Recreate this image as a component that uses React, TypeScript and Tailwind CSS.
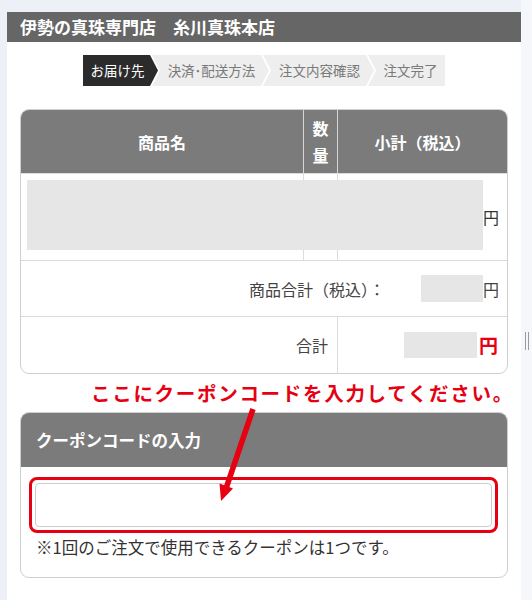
import React from 'react';

const steps = [
  { label: 'お届け先', width: 'w-[75px]', active: true },
  { label: '決済･配送方法', width: 'w-[117px]', active: false },
  { label: '注文内容確認', width: 'w-[111px]', active: false },
  { label: '注文完了', width: 'w-[77px]', active: false },
];

// chevron shapes for the checkout step bar
const clipFor = (i: number, last: boolean) => {
  if (i === 0) return 'polygon(0 0, calc(100% - 8px) 0, 100% 50%, calc(100% - 8px) 100%, 0 100%)';
  if (last) return 'polygon(0 0, 100% 0, 100% 100%, 0 100%, 8px 50%)';
  return 'polygon(0 0, calc(100% - 8px) 0, 100% 50%, calc(100% - 8px) 100%, 0 100%, 8px 50%)';
};

const StepBar: React.FC = () => (
  <div className="flex justify-center mt-[13px]">
    <div className="flex h-[31px]">
      {steps.map((s, i) => (
        <div
          key={s.label}
          className={`${s.width} ${i > 0 ? 'ml-[-6px] pl-[8px]' : 'pr-[6px]'} ${i > 0 && i < steps.length - 1 ? 'pr-[6px]' : ''} flex items-center justify-center text-[13.5px] whitespace-nowrap ${
            s.active ? 'bg-[#2b2b2b] text-white' : 'bg-[#eeeeee] text-[#7a7a7a]'
          }`}
          style={{ clipPath: clipFor(i, i === steps.length - 1) }}
        >
          {s.label}
        </div>
      ))}
    </div>
  </div>
);

const GrayBox: React.FC<{ className: string }> = ({ className }) => (
  <div className={`bg-[#e6e6e6] ${className}`} />
);

const OrderTable: React.FC = () => (
  <div className="mx-[13px] mt-[23px] border border-[#cfcfcf] rounded-[9px] overflow-hidden">
    {/* header */}
    <div className="grid grid-cols-[282px_35px_1fr] h-[63px] bg-[#7b7b7b] text-white font-bold text-[16px]">
      <div className="flex items-center justify-center">商品名</div>
      <div className="flex flex-col items-center justify-center border-l border-r border-[#d6d6d6] leading-[27px]">
        <span>数</span>
        <span>量</span>
      </div>
      <div className="flex items-center justify-center">小計（税込）</div>
    </div>

    {/* item row */}
    <div className="relative grid grid-cols-[282px_35px_1fr] h-[87px] border-t border-[#dcdcdc]">
      <div />
      <div className="border-l border-r border-[#dcdcdc]" />
      <div className="flex items-center justify-end pr-[8px] text-[16px] text-[#333]">円</div>
      <GrayBox className="absolute left-[6px] top-[6px] w-[456px] h-[70px]" />
    </div>

    {/* subtotal */}
    <div className="flex items-center justify-end h-[56px] border-t border-[#dcdcdc] pr-[8px] text-[16px] text-[#444]">
      <span>商品合計（税込）：</span>
      <GrayBox className="ml-[36px] w-[62px] h-[27px]" />
      <span>円</span>
    </div>

    {/* total */}
    <div className="grid grid-cols-[317px_1fr] h-[57px] border-t border-[#dcdcdc]">
      <div className="flex items-center justify-end pr-[9px] border-r border-[#dcdcdc] text-[16px] text-[#444]">合計</div>
      <div className="flex items-center justify-end pr-[9px]">
        <GrayBox className="w-[73px] h-[26px]" />
        <span className="ml-[2px] text-[19px] font-bold text-[#e60012]">円</span>
      </div>
    </div>
  </div>
);

const CouponBox: React.FC = () => (
  <div className="mx-[13px] border border-[#cfcfcf] rounded-[9px] overflow-hidden">
    <div className="h-[54px] bg-[#7b7b7b] flex items-center pl-[15px] text-white font-bold text-[16.5px]">
      クーポンコードの入力
    </div>
    <div className="pt-[10px] pb-[19px]">
      <div className="ml-[8px] mr-[9px] border-[3px] border-[#e60012] rounded-[8px] p-[3px]">
        <input className="block w-full h-[44px] border border-[#cccccc] rounded-[4px] bg-white outline-none px-2" />
      </div>
      <p className="mt-[3px] pl-[15px] text-[16.5px] leading-[22px] text-[#333] whitespace-nowrap">
        ※1回のご注文で使用できるクーポンは1つです。
      </p>
    </div>
  </div>
);

export default function App() {
  return (
    <div
      className="relative flex w-[532px] h-[600px] overflow-hidden bg-[#edf0f6]"
      style={{ fontFamily: '"Noto Sans CJK JP", "Noto Sans", sans-serif' }}
    >
      <div className="w-[7px] shrink-0" />
      <div className="w-[514px] shrink-0 mt-[12px] bg-white">
        <div className="h-[30px] bg-[#666666] text-white font-bold text-[17px] leading-[30px] pl-[13px] whitespace-nowrap">
          伊勢の真珠専門店　糸川真珠本店
        </div>
        <StepBar />
        <OrderTable />
        <div className="h-[38px] flex items-center pl-[84px] text-[19.5px] font-bold tracking-[1.7px] text-[#e60012] whitespace-nowrap">
          ここにクーポンコードを入力してください。
        </div>
        <CouponBox />
      </div>
      <div className="w-[11px] shrink-0 bg-[#f5f7fb] flex justify-center">
        <div className="mt-[332px] flex gap-[2px] h-[18px]">
          <div className="w-px bg-[#9a9a9a]" />
          <div className="w-px bg-[#9a9a9a]" />
        </div>
      </div>

      {/* annotation arrow */}
      <svg className="absolute left-0 top-0 pointer-events-none" width="532" height="600">
        <line x1="253" y1="409" x2="226.5" y2="487" stroke="#e60012" strokeWidth="5.5" />
        <polygon points="221,501 233,488.5 219.5,483.5" fill="#e60012" />
      </svg>
    </div>
  );
}
